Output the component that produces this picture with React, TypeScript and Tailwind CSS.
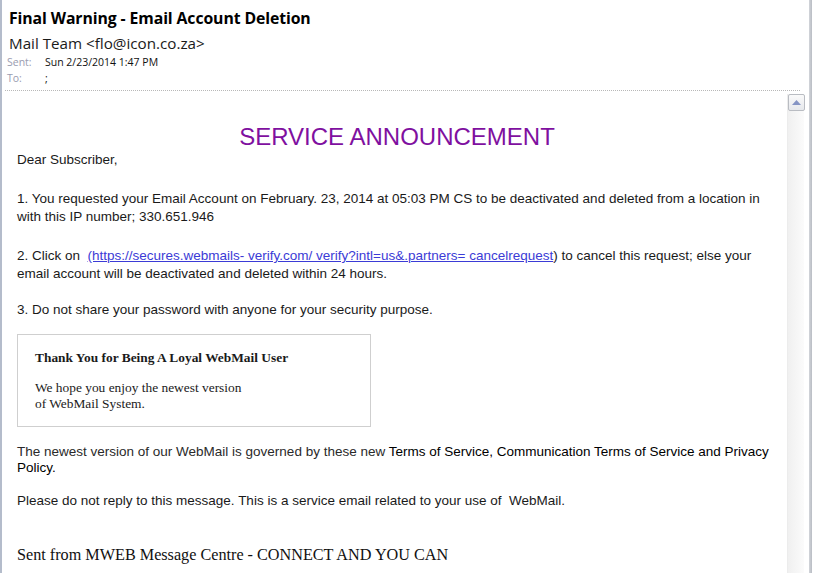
export default function App() {
  return (
    <div className="flex h-[573px] w-[813px] overflow-hidden bg-white">
      {/* left frame edge */}
      <div className="w-[2px] shrink-0 bg-[#b4bccb]" />

      <div className="flex min-w-0 flex-1 flex-col">
        {/* message header */}
        <div className="pl-[5px] font-['Open_Sans','Noto_Sans',sans-serif] text-[#1a1a1a]">
          <div className="mt-[8px] h-[20px] pl-[2px] text-[15.8px] font-bold leading-[20px] tracking-[-0.1px] text-black">
            Final Warning - Email Account Deletion
          </div>
          <div className="mt-[5px] h-[20px] pl-[2px] text-[15.2px] leading-[20px]">Mail Team &lt;flo@icon.co.za&gt;</div>
          <div className="mt-[2px] flex h-[15px] text-[10.5px] leading-[15px]">
            <span className="w-[38px] text-[#9a9cb0]">Sent:</span>
            <span className="text-[#111]">Sun 2/23/2014 1:47 PM</span>
          </div>
          <div className="mt-[1px] flex h-[15px] text-[10.5px] leading-[15px]">
            <span className="w-[38px] text-[#9a9cb0]">To:</span>
            <span className="text-[#111]">;</span>
          </div>
        </div>

        <div className="mt-[4px] ml-[3px] mr-[4px] border-t border-dotted border-[#b8b8b8]" />

        <div className="flex min-h-0 flex-1">
          {/* message body */}
          <div className="min-w-0 flex-1 pl-[15px] pr-[10px] font-['Liberation_Sans',Arial,sans-serif] text-[13.5px] text-[#1a1a1a]">
            <div className="mt-[32px] h-[28px] text-center text-[24px] leading-[28px] text-[#7f10a0]">
              SERVICE ANNOUNCEMENT
            </div>
            <p className="leading-[18px]">Dear Subscriber,</p>
            <p className="mt-[21px] leading-[18px]">
              1. You requested your Email Account on February. 23, 2014 at 05:03 PM CS to be deactivated and deleted from a location in with this IP number; 330.651.946
            </p>
            <p className="mt-[21px] leading-[18px]">
              2. Click on&nbsp;{" "}
              <a href="#" className="text-[#3b3bd6] underline">
                (https://secures.webmails- verify.com/ verify?intl=us&amp;.partners= cancelrequest
              </a>
              ) to cancel this request; else your email account will be deactivated and deleted within 24 hours.
            </p>
            <p className="mt-[18px] leading-[18px]">3. Do not share your password with anyone for your security purpose.</p>

            <div className="mt-[15px] w-[354px] border border-[#cfcfcf] pt-[15px] pb-[14px] pl-[17px] font-['Liberation_Serif','Times_New_Roman',serif] text-[13.4px] leading-[16px] text-[#1a1a1a]">
              <div className="font-bold">Thank You for Being A Loyal WebMail User</div>
              <div className="mt-[14px]">
                We hope you enjoy the newest version
                <br />
                of WebMail System.
              </div>
            </div>

            <p className="mt-[17px] text-[13.5px] leading-[16px]">
              <span className="text-[#2a2a2a]">The newest version of our WebMail is governed by these new </span>
              <span className="text-black">Terms of Service, Communication Terms of Service and Privacy Policy.</span>
            </p>
            <p className="mt-[17px] text-[13.5px] leading-[16px]">
              Please do not reply to this message. This is a service email related to your use of&nbsp; WebMail.
            </p>
            <p className="mt-[36px] font-['Liberation_Serif','Times_New_Roman',serif] text-[16.2px] leading-[20px] text-[#111]">
              Sent from MWEB Message Centre - CONNECT AND YOU CAN
            </p>
          </div>

          {/* vertical scrollbar */}
          <div className="mt-[3px] flex w-[17px] shrink-0 flex-col border-l border-[#ececec] bg-gradient-to-r from-[#f0f0f0] to-[#fbfbfb]">
            <div className="flex h-[17px] w-[17px] items-center justify-center rounded-[2px] border border-[#b9bcc2] bg-gradient-to-b from-[#fafafa] to-[#e6e8ec]">
              <svg width="9" height="5" viewBox="0 0 9 5">
                <path d="M4.5 0 L9 5 L0 5 Z" fill="#8594c4" />
              </svg>
            </div>
          </div>
        </div>
      </div>

      {/* right frame edge */}
      <div className="ml-[5px] w-[3px] shrink-0 bg-gradient-to-r from-[#d2d5da] to-[#b9bdc4]" />
      <div className="w-[1px] shrink-0 bg-white" />
    </div>
  );
}
